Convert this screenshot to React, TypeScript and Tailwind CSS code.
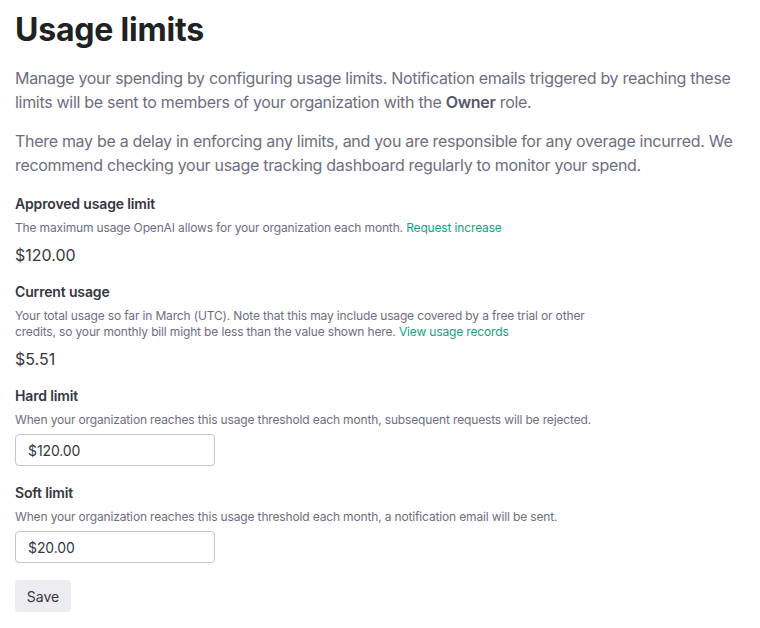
import React from "react";

function Section({ title, className, children }: { title: string; className: string; children: React.ReactNode }) {
  return (
    <div className={className}>
      <div className="text-[14px] leading-[20px] font-semibold tracking-[-0.15px] text-[#353740]">{title}</div>
      {children}
    </div>
  );
}

function Desc({ children }: { children: React.ReactNode }) {
  return (
    <div className="mt-[6px] max-w-[580px] text-[12px] leading-[16px] tracking-[-0.15px] text-[#6e6e80]">{children}</div>
  );
}

function LimitInput({ value }: { value: string }) {
  return (
    <input
      defaultValue={value}
      className="mt-[6px] block h-[32px] w-[200px] rounded-[4px] border border-[#c5c5d2] bg-white px-[12px] text-[14px] tracking-[-0.1px] text-[#353740] outline-none"
    />
  );
}

export default function App() {
  return (
    <div className="min-h-screen bg-white px-[15px] pt-[10px] font-['Inter',sans-serif] text-[#353740]">
      <h1 className="text-[32px] leading-[40px] font-bold tracking-[-0.2px] text-[#202123]">Usage limits</h1>
      <div className="tracking-[-0.3px] text-[16px] leading-[24px] text-[#6e6e80]">
        <p className="mt-[16px]">
          Manage your spending by configuring usage limits. Notification emails triggered by reaching these limits will
          be sent to members of your organization with the <b className="font-semibold text-[#565869]">Owner</b> role.
        </p>
        <p className="mt-[15px]">
          There may be a delay in enforcing any limits, and you are responsible for any overage incurred. We recommend
          checking your usage tracking dashboard regularly to monitor your spend.
        </p>
      </div>

      <Section title="Approved usage limit" className="mt-[17px]">
        <Desc>
          The maximum usage OpenAI allows for your organization each month.{" "}
          <a className="text-[#10a37f]">Request increase</a>
        </Desc>
        <div className="mt-[7px] text-[16px] leading-[24px] text-[#353740]">$120.00</div>
      </Section>

      <Section title="Current usage" className="mt-[15px]">
        <Desc>
          Your total usage so far in March (UTC). Note that this may include usage covered by a free trial or other
          credits, so your monthly bill might be less than the value shown here.{" "}
          <a className="text-[#10a37f]">View usage records</a>
        </Desc>
        <div className="mt-[7px] text-[16px] leading-[24px] text-[#353740]">$5.51</div>
      </Section>

      <Section title="Hard limit" className="mt-[15px]">
        <Desc>When your organization reaches this usage threshold each month, subsequent requests will be rejected.</Desc>
        <LimitInput value="$120.00" />
      </Section>

      <Section title="Soft limit" className="mt-[17px]">
        <Desc>When your organization reaches this usage threshold each month, a notification email will be sent.</Desc>
        <LimitInput value="$20.00" />
      </Section>

      <button className="mt-[17px] h-[32px] w-[56px] rounded-[4px] bg-[#ececf1] text-[14px] text-[#353740]">Save</button>
    </div>
  );
}
